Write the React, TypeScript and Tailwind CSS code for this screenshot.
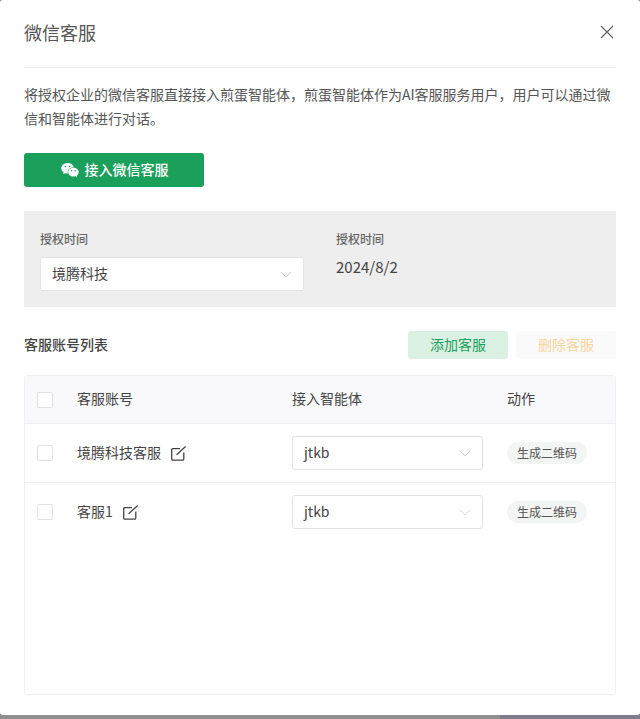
import React from 'react';
import { AiFillWechat } from 'react-icons/ai';

const FONT = "font-['Noto_Sans_CJK_SC','Noto_Sans',sans-serif]";

const Chevron: React.FC = () => (
  <svg width="12" height="7" viewBox="0 0 12 7" fill="none" stroke="#d4d4d4" strokeWidth="1">
    <path d="M0.8 0.8 L6 6 L11.2 0.8" />
  </svg>
);

const EditIcon: React.FC = () => (
  <svg width="15" height="15" viewBox="0 0 15 15" fill="none" stroke="#444" strokeWidth="1.3">
    <path d="M9 2.6 H1.8 Q0.7 2.6 0.7 3.7 V13 Q0.7 14.2 1.8 14.2 H11.6 Q12.8 14.2 12.8 13 V6.5" />
    <path d="M5.6 8.8 L14.6 0.6" />
  </svg>
);

const Checkbox: React.FC = () => (
  <span className="block w-4 h-4 rounded-[2px] border border-[#e2e2e6] bg-white" />
);

const Select: React.FC<{ value: string; className: string }> = ({ value, className }) => (
  <div className={`flex items-center justify-between h-[34px] pl-[11px] pr-[11px] bg-white rounded-[3px] border text-[14px] text-[#444] ${className}`}>
    <span className="pb-px">{value}</span>
    <Chevron />
  </div>
);

const rows = [
  { id: 1, name: '境腾科技客服', agent: 'jtkb' },
  { id: 2, name: '客服1', agent: 'jtkb' },
];

export default function App() {
  return (
    <div className={`${FONT} h-[719px] w-[640px] flex flex-col overflow-hidden bg-[#8f8f8f]`}>
      <div className="h-[715px] shrink-0 bg-white rounded-[3px] px-6 flex flex-col">
        <div className="h-[68px] shrink-0 flex items-center justify-between border-b border-[#eeeeee] pb-[3px]">
          <h2 className="text-[18px] font-normal text-[#555]">微信客服</h2>
          <svg width="14" height="14" viewBox="0 0 14 14" fill="none" stroke="#666" strokeWidth="1.3" className="mr-[2px]">
            <path d="M1 1 L13 13 M13 1 L1 13" />
          </svg>
        </div>

        <p className="mt-[14px] text-[14px] leading-6 text-[#555]">
          将授权企业的微信客服直接接入煎蛋智能体，煎蛋智能体作为AI客服服务用户，用户可以通过微信和智能体进行对话。
        </p>

        <button className="mt-[23px] w-[180px] h-[34px] shrink-0 flex items-center justify-center gap-[5px] pb-px bg-[#1aa05b] rounded-[3px] text-white text-[14px] font-medium">
          <AiFillWechat className="w-5 h-5" />
          <span>接入微信客服</span>
        </button>

        <div className="mt-6 h-24 shrink-0 bg-[#eeeeee] pt-[18px] px-4 flex">
          <div className="w-[296px] shrink-0">
            <div className="text-[12px] leading-5 font-medium text-[#666]">授权时间</div>
            <Select value="境腾科技" className="mt-2 w-[264px] border-[#e4e4e4]" />
          </div>
          <div>
            <div className="text-[12px] leading-5 font-medium text-[#666]">授权时间</div>
            <div className="mt-2 text-[15px] leading-5 text-[#444]">2024/8/2</div>
          </div>
        </div>

        <div className="mt-6 h-7 shrink-0 flex items-center justify-between">
          <h3 className="pb-px text-[14px] font-medium text-[#444]">客服账号列表</h3>
          <div className="flex gap-2">
            <button className="w-[100px] h-7 pb-px rounded-[3px] bg-[#daf0e3] text-[14px] text-[#1aa05b]">添加客服</button>
            <button className="w-[100px] h-7 pb-px rounded-[3px] bg-[#fafafa] text-[14px] text-[#f9d59f]">删除客服</button>
          </div>
        </div>

        <div className="mt-4 h-[320px] shrink-0 rounded-[3px] border border-[#eeeef3] text-[14px] text-[#444]">
          <div className="h-12 flex items-center bg-[#f9f9fb] border-b border-[#eeeef3]">
            <div className="w-[52px] pl-3"><Checkbox /></div>
            <div className="w-[215px] pb-[2px]">客服账号</div>
            <div className="w-[215px] pb-[2px]">接入智能体</div>
            <div className="pb-[2px]">动作</div>
          </div>
          {rows.map((row, i) => (
            <div key={row.id} className={`h-[59px] flex items-center border-b ${i === 0 ? 'border-[#eeeef3]' : 'border-transparent'}`}>
              <div className="w-[52px] pl-3"><Checkbox /></div>
              <div className="w-[215px] flex items-center gap-[10px]">
                <span className="pb-px">{row.name}</span>
                <EditIcon />
              </div>
              <div className="w-[215px]">
                <Select value={row.agent} className="w-[191px] border-[#e2e2e6]" />
              </div>
              <button className="w-20 h-[22px] rounded-full bg-[#f3f4f4] text-[12px] text-[#555]">生成二维码</button>
            </div>
          ))}
        </div>
      </div>
      <div className="flex-1 flex">
        <div className="w-[500px] bg-[#8f8f8f]" />
        <div className="flex-1 bg-[#7f7c8c]" />
      </div>
    </div>
  );
}
